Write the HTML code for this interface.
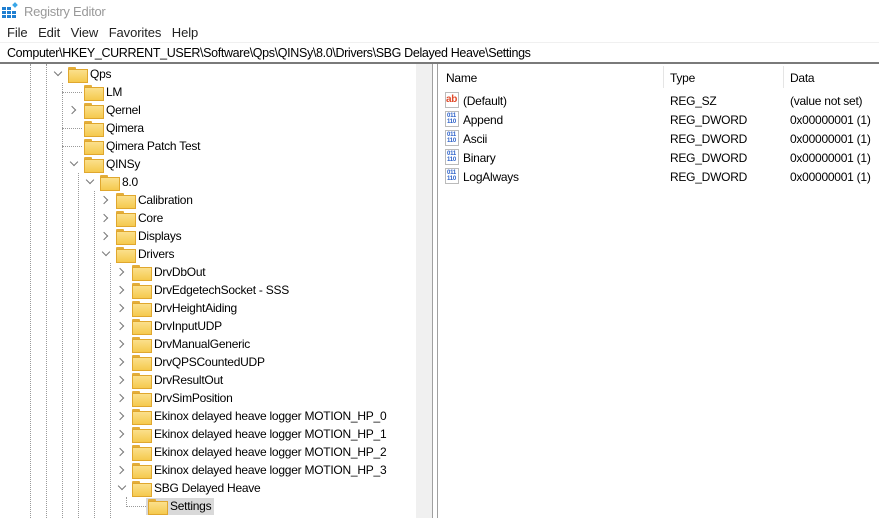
<!DOCTYPE html>
<html><head><meta charset="utf-8"><style>
*{margin:0;padding:0;box-sizing:border-box}
body{width:879px;height:518px;overflow:hidden;background:#fff;font-family:"Liberation Sans",Arial,sans-serif;font-size:12px;color:#000;position:relative;letter-spacing:-0.25px}
.a{position:absolute;white-space:nowrap}
.fold{position:absolute;width:18px;height:14px}
.fold:before{content:"";position:absolute;left:0;top:0;width:8px;height:4px;background:#e3ad3a;border-radius:1px 1px 0 0}
.fold:after{content:"";position:absolute;left:0;top:2px;width:18px;height:12px;background:linear-gradient(#fbe08c,#f5c94e);border:1px solid #e0a72e}
.vl{position:absolute;width:1px;border-left:1px dotted #9a9a9a}
.hl{position:absolute;height:1px;border-top:1px dotted #9a9a9a}
.chev{position:absolute;width:6px;height:6px;border-right:1.3px solid #777;border-bottom:1.3px solid #777}
</style></head><body>
<svg class="a" style="left:1px;top:2px" width="18" height="18" viewBox="0 0 18 18">
<g fill="#1f7fd1"><rect x="1" y="5" width="4" height="3"/><rect x="6" y="5" width="4" height="3"/><rect x="1" y="9" width="4" height="3"/><rect x="6" y="9" width="4" height="3"/><rect x="11" y="9" width="4" height="3"/><rect x="1" y="13" width="4" height="3"/><rect x="6" y="13" width="4" height="3"/><rect x="11" y="13" width="4" height="3"/></g>
<rect x="12" y="1" width="4" height="4" fill="#3aa7e8" transform="rotate(45 14 3)"/></svg>
<div class="a" style="left:24px;top:4px;font-size:13px;color:#999">Registry Editor</div>
<div class="a" style="left:7px;top:25px;font-size:13px;color:#222;letter-spacing:-0.1px">File&nbsp;&nbsp;&nbsp;Edit&nbsp;&nbsp;&nbsp;View&nbsp;&nbsp;&nbsp;Favorites&nbsp;&nbsp;&nbsp;Help</div>
<div class="a" style="left:0;top:42px;width:879px;height:1px;background:#f0f0f0"></div>
<div class="a" style="left:7px;top:46px;font-size:12.5px;letter-spacing:-0.35px">Computer\HKEY_CURRENT_USER\Software\Qps\QINSy\8.0\Drivers\SBG Delayed Heave\Settings</div>
<div class="a" style="left:0;top:62px;width:879px;height:2px;background:#7a7a7a"></div>
<div class="a" style="left:416px;top:64px;width:16px;height:454px;background:#f0f0f0"></div>
<div class="a" style="left:432px;top:64px;width:1px;height:454px;background:#a0a0a0"></div>
<div class="a" style="left:433px;top:64px;width:4px;height:454px;background:#fff"></div>
<div class="a" style="left:437px;top:64px;width:1px;height:454px;background:#a0a0a0"></div>
<div id="tree"></div>
<div class="a" style="left:446px;top:71px">Name</div>
<div class="a" style="left:663px;top:66px;width:1px;height:22px;background:#e5e5e5"></div>
<div class="a" style="left:670px;top:71px">Type</div>
<div class="a" style="left:783px;top:66px;width:1px;height:22px;background:#e5e5e5"></div>
<div class="a" style="left:790px;top:71px">Data</div>
<div id="vals"></div>
<script>
var t=document.getElementById('tree'),h='';
var rows=[[0,'Qps','d'],[1,'LM',''],[1,'Qernel','r'],[1,'Qimera',''],[1,'Qimera Patch Test',''],[1,'QINSy','d'],[2,'8.0','d'],[3,'Calibration','r'],[3,'Core','r'],[3,'Displays','r'],[3,'Drivers','d']];
['DrvDbOut','DrvEdgetechSocket - SSS','DrvHeightAiding','DrvInputUDP','DrvManualGeneric','DrvQPSCountedUDP','DrvResultOut','DrvSimPosition','Ekinox delayed heave logger MOTION_HP_0','Ekinox delayed heave logger MOTION_HP_1','Ekinox delayed heave logger MOTION_HP_2','Ekinox delayed heave logger MOTION_HP_3'].forEach(function(n){rows.push([4,n,'r'])});
rows.push([4,'SBG Delayed Heave','d']);rows.push([5,'Settings','']);
[[30,64,518],[46,64,518],[62,83,518],[78,173,518],[94,191,518],[110,263,518],[126,497,507]].forEach(function(v){h+='<div class="vl" style="left:'+v[0]+'px;top:'+v[1]+'px;height:'+(v[2]-v[1])+'px"></div>'});
rows.forEach(function(r,i){var top=65+18*i,fx=68+16*r[0],cy=top+9;
if(r[2]=='d')h+='<div class="chev" style="left:'+(fx-13)+'px;top:'+(cy-5)+'px;transform:rotate(45deg)"></div>';
else if(r[2]=='r')h+='<div class="chev" style="left:'+(fx-15)+'px;top:'+(cy-3)+'px;transform:rotate(-45deg)"></div>';
else h+='<div class="hl" style="left:'+(fx-22)+'px;top:'+cy+'px;width:20px"></div>';
if(r[1]=='Settings')h+='<div class="a" style="left:'+(fx-2)+'px;top:'+(top+1)+'px;width:68px;height:17px;background:#d9d9d9"></div>';
h+='<div class="fold" style="left:'+fx+'px;top:'+(top+2)+'px"></div>';
h+='<div class="a" style="left:'+(fx+22)+'px;top:'+(top+2)+'px">'+r[1]+'</div>';});
t.innerHTML=h;
var v='',vs=[['(Default)','REG_SZ','(value not set)',1],['Append','REG_DWORD','0x00000001 (1)'],['Ascii','REG_DWORD','0x00000001 (1)'],['Binary','REG_DWORD','0x00000001 (1)'],['LogAlways','REG_DWORD','0x00000001 (1)']];
vs.forEach(function(r,i){var top=91+19*i;
if(r[3])v+='<div class="a" style="left:445px;top:'+(top+1)+'px;width:14px;height:16px;border:1px solid #bbb;background:#fff"><span style="position:absolute;left:0;top:1px;font-size:10px;font-weight:bold;color:#e04a2a">ab</span></div>';
else v+='<div class="a" style="left:445px;top:'+(top+1)+'px;width:14px;height:16px;border:1px solid #bbb;background:#fff;font-size:6px;line-height:6px;font-weight:bold;color:#2a5fc8;padding:1px 0 0 1px">011<br>110</div>';
v+='<div class="a" style="left:463px;top:'+(top+3)+'px">'+r[0]+'</div><div class="a" style="left:670px;top:'+(top+3)+'px">'+r[1]+'</div><div class="a" style="left:790px;top:'+(top+3)+'px">'+r[2]+'</div>';});
document.getElementById('vals').innerHTML=v;
</script>
</body></html>
